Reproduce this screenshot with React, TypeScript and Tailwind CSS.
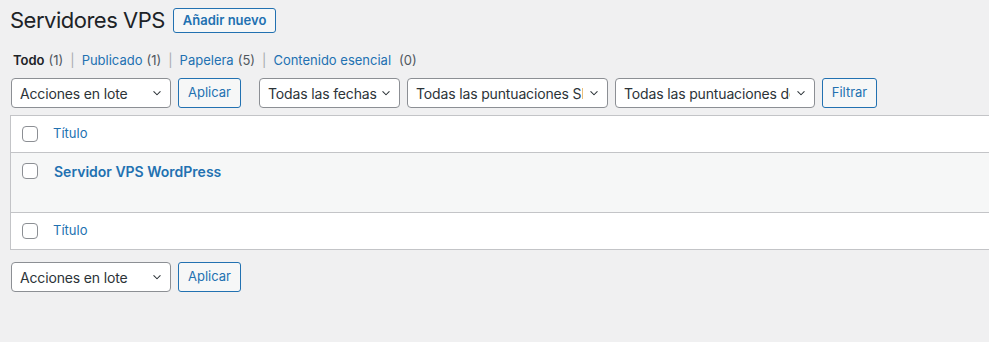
import React from 'react';

const font = { fontFamily: 'Inter, "Liberation Sans", sans-serif' };

function Chevron() {
    return (
        <svg className="w-[14px] h-[14px] text-[#2c3338]" viewBox="0 0 20 20" fill="none" stroke="currentColor">
            <path strokeWidth={1.5} strokeLinecap="round" strokeLinejoin="round" d="M5.5 8l4.5 4.5 4.5-4.5" />
        </svg>
    );
}

function Select({ label, width, pad = 'pr-[26px]' }: { label: string; width: string; pad?: string }) {
    return (
        <div className={`${width} shrink-0 relative h-[30px] bg-white border border-[#8c8f94] rounded-[4px] flex items-center overflow-hidden`}>
            <span className={`block min-w-0 flex-1 pl-[8px] ${pad} overflow-hidden whitespace-nowrap text-[14px] tracking-[-0.15px] text-[#2c3338]`}>
                <span className="block overflow-hidden">{label}</span>
            </span>
            <span className="absolute right-[6px] top-[7px]">
                <Chevron />
            </span>
        </div>
    );
}

function SecondaryButton({ label, width }: { label: string; width: string }) {
    return (
        <div className={`${width} shrink-0 h-[30px] bg-[#f6f7f7] border border-[#2271b1] rounded-[3px] flex items-center justify-center text-[13px] text-[#2271b1]`}>
            {label}
        </div>
    );
}

function Checkbox() {
    return <div className="w-[16px] h-[16px] bg-white border border-[#8c8f94] rounded-[4px]" />;
}

export default function App() {
    return (
        <div className="w-full h-[342px] bg-[#f0f0f1] overflow-hidden text-[#3c434a]" style={font}>
            <div className="pl-[10px] pt-[8px]">
                {/* Heading */}
                <div className="flex items-center gap-[8px]">
                    <h1 className="text-[22px] leading-[25px] tracking-[-0.5px] text-[#1d2327] font-normal">Servidores VPS</h1>
                    <div className="h-[25px] px-[9px] bg-[#f6f7f7] border border-[#2271b1] rounded-[3px] flex items-center text-[13px] font-semibold text-[#2271b1]">
                        Añadir nuevo
                    </div>
                </div>

                {/* Views */}
                <div className="mt-[18px] ml-[3px] flex items-center text-[13px] leading-[18px] text-[#50575e]">
                    <span className="font-semibold text-[#1d2327]">Todo</span>
                    <span className="ml-[4px]">(1)</span>
                    <span className="mx-[7px] text-[#a7aaad]">|</span>
                    <span className="text-[#2271b1]">Publicado</span>
                    <span className="ml-[4px]">(1)</span>
                    <span className="mx-[7px] text-[#a7aaad]">|</span>
                    <span className="text-[#2271b1]">Papelera</span>
                    <span className="ml-[4px]">(5)</span>
                    <span className="mx-[7px] text-[#a7aaad]">|</span>
                    <span className="text-[#2271b1]">Contenido esencial</span>
                    <span className="ml-[8px]">(0)</span>
                </div>

                {/* Top nav */}
                <div className="mt-[9px] ml-[1px] flex items-center">
                    <Select label="Acciones en lote" width="w-[160px]" />
                    <div className="ml-[7px]">
                        <SecondaryButton label="Aplicar" width="w-[63px]" />
                    </div>
                    <div className="ml-[18px] flex items-center gap-[7px]">
                        <Select label="Todas las fechas" width="w-[141px]" pad="pr-[12px]" />
                        <Select label="Todas las puntuaciones SEO" width="w-[201px]" pad="pr-[24px]" />
                        <Select label="Todas las puntuaciones de legibilidad" width="w-[200px]" pad="pr-[24px]" />
                        <SecondaryButton label="Filtrar" width="w-[55px]" />
                    </div>
                </div>

                {/* Table */}
                <div className="mt-[7px] w-[1040px] bg-white border border-[#c3c4c7]">
                    <div className="h-[37px] flex items-center border-b border-[#c3c4c7]">
                        <div className="ml-[11px]"><Checkbox /></div>
                        <span className="ml-[15px] text-[13px] text-[#2271b1]">Título</span>
                    </div>
                    <div className="h-[59px] bg-[#f6f7f7] flex items-start">
                        <div className="ml-[11px] mt-[10px]"><Checkbox /></div>
                        <span className="ml-[16px] mt-[8px] text-[14px] font-semibold text-[#2271b1]">Servidor VPS WordPress</span>
                    </div>
                    <div className="h-[37px] flex items-center border-t border-[#c3c4c7]">
                        <div className="ml-[11px]"><Checkbox /></div>
                        <span className="ml-[15px] text-[13px] text-[#2271b1]">Título</span>
                    </div>
                </div>

                {/* Bottom nav */}
                <div className="mt-[12px] ml-[1px] flex items-center">
                    <Select label="Acciones en lote" width="w-[160px]" />
                    <div className="ml-[7px]">
                        <SecondaryButton label="Aplicar" width="w-[63px]" />
                    </div>
                </div>
            </div>
        </div>
    );
}
